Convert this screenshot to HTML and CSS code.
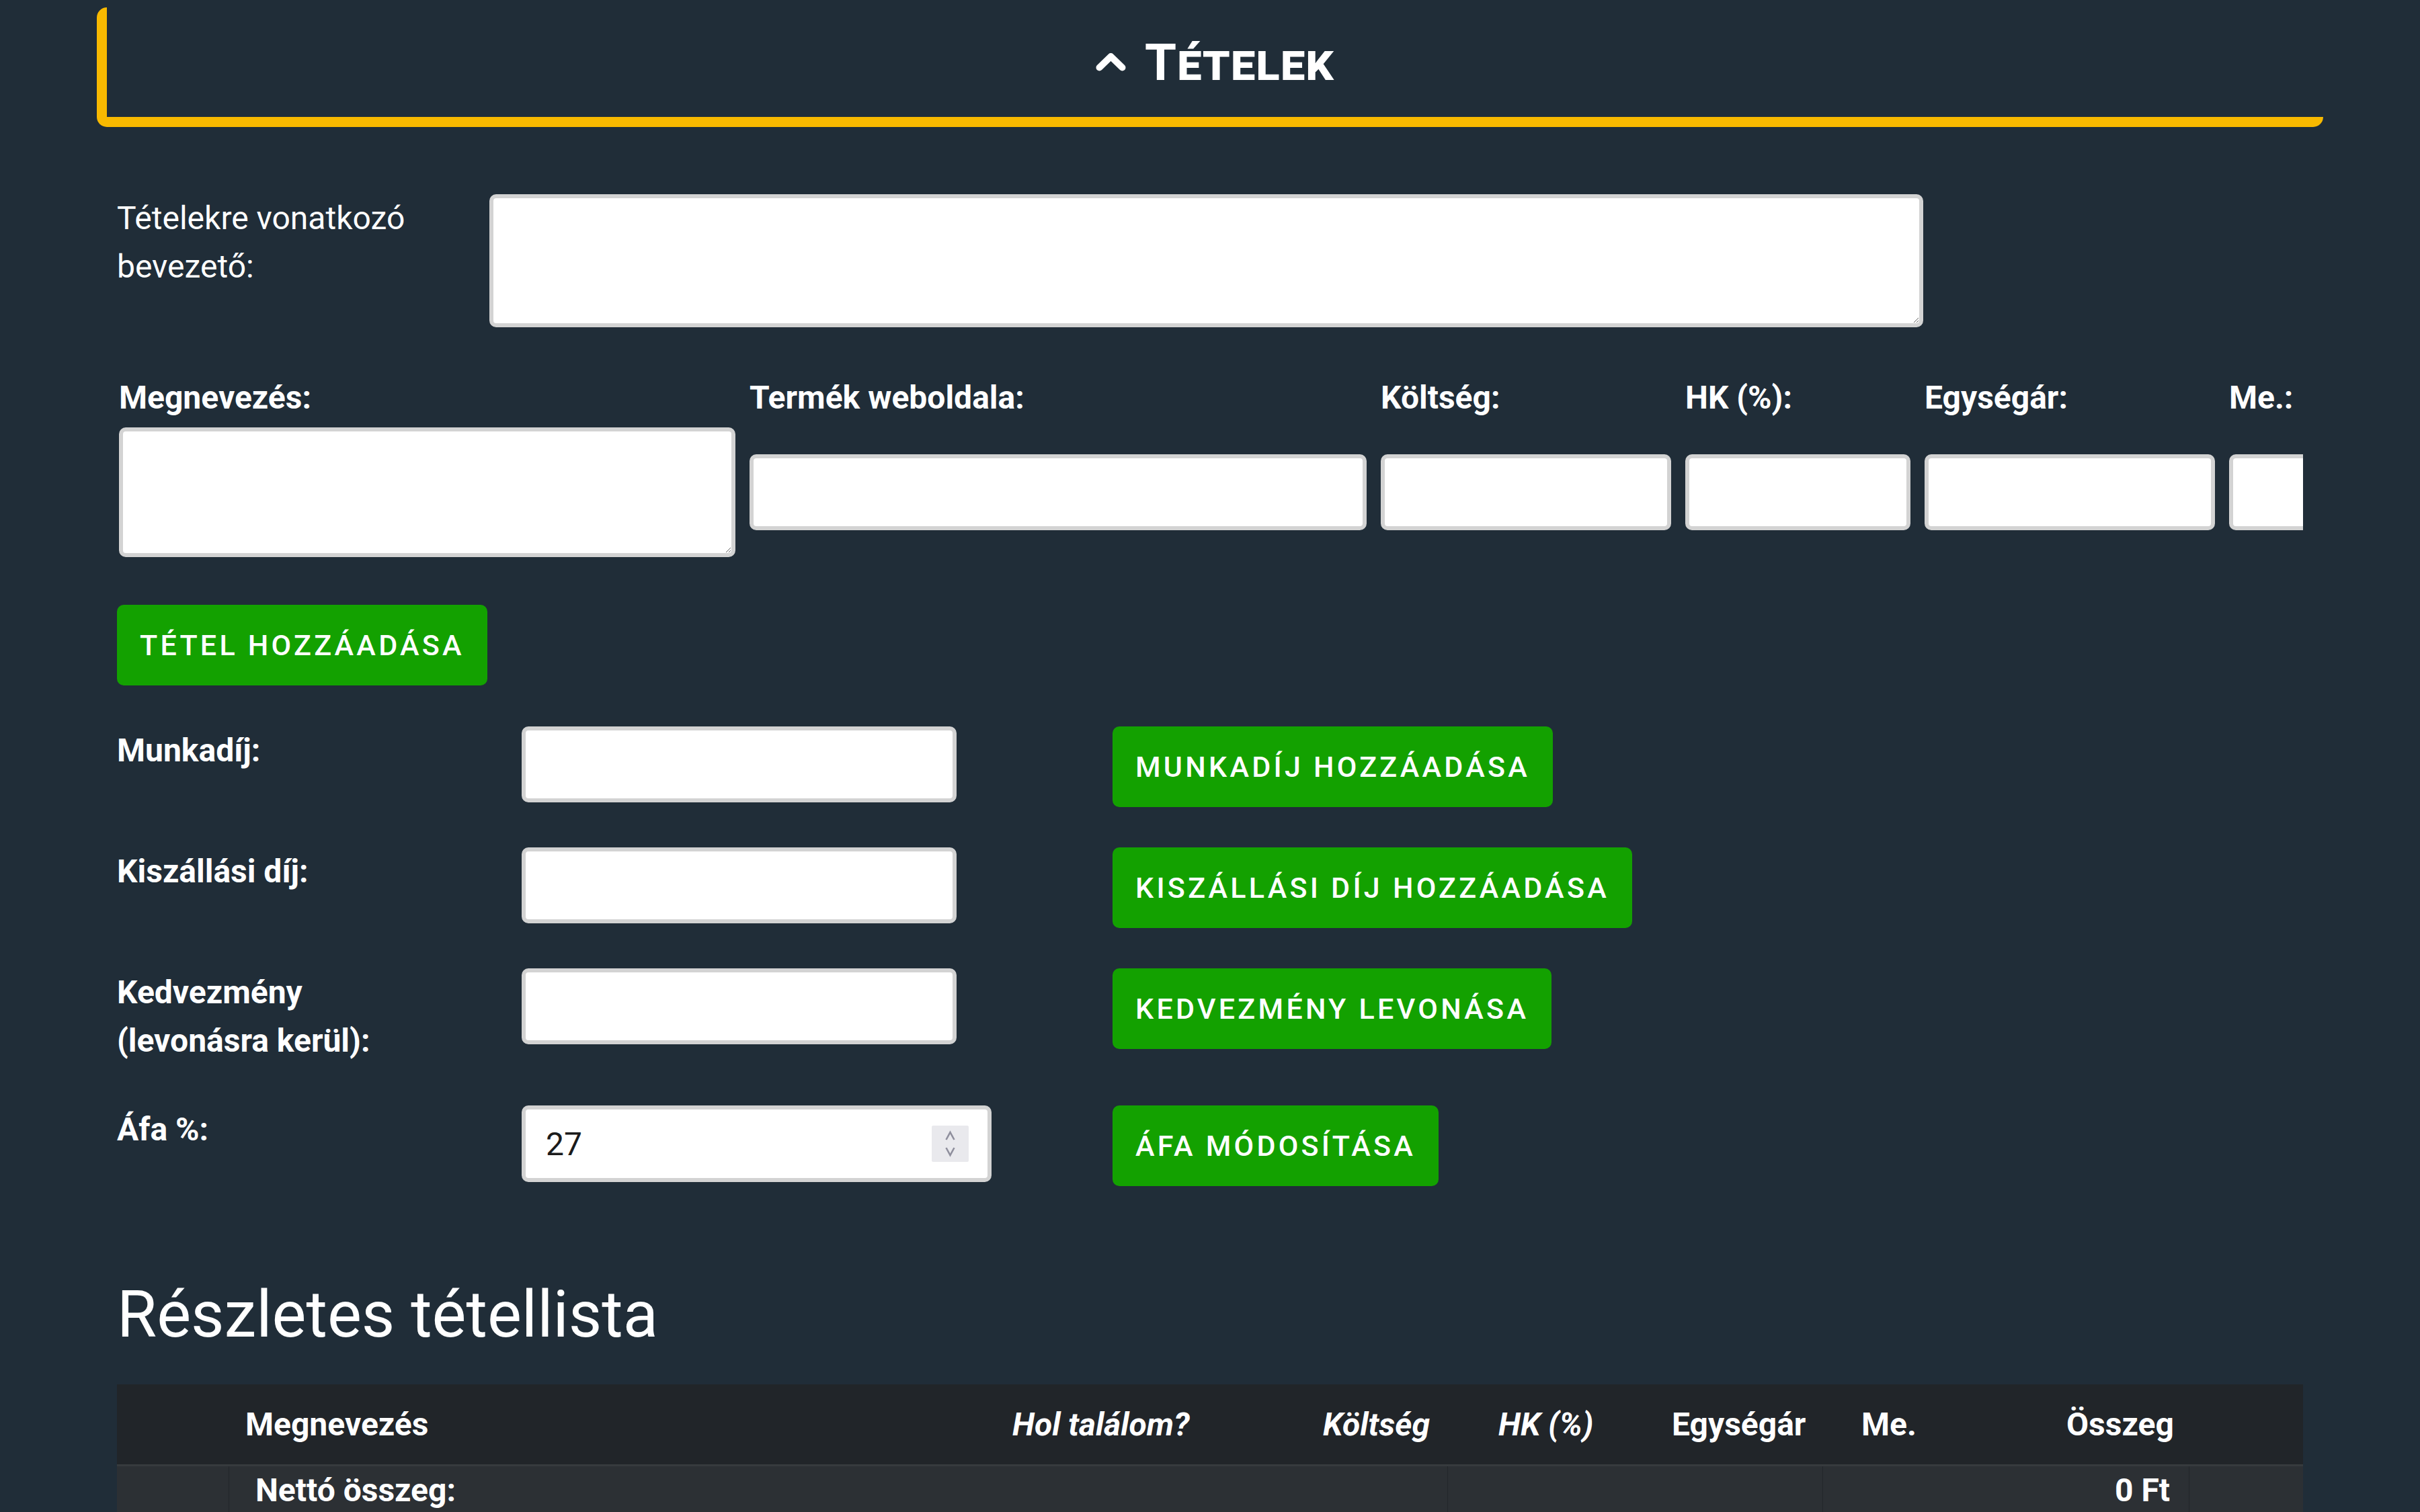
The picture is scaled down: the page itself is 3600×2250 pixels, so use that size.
FILE: index.html
```html
<!DOCTYPE html>
<html lang="hu">
<head>
<meta charset="utf-8">
<title>Tételek</title>
<link rel="stylesheet" href="styles.css">
</head>
<body>
<div class="page">
  <div class="section-head">
    <svg class="chev" viewBox="0 0 45 29" aria-hidden="true"><path d="M5.5 22.5 L22.5 6 L39.5 22.5" fill="none" stroke="#fff" stroke-width="10" stroke-linecap="round" stroke-linejoin="round"/></svg>
    <span class="section-title">Tételek</span>
  </div>

  <div class="content">
    <div class="intro-row">
      <label class="intro-label">Tételekre vonatkozó bevezető:</label>
      <textarea class="field intro-text"></textarea>
    </div>

    <div class="item-grid">
      <label class="lbl">Megnevezés:</label>
      <label class="lbl">Termék weboldala:</label>
      <label class="lbl">Költség:</label>
      <label class="lbl">HK (%):</label>
      <label class="lbl">Egységár:</label>
      <label class="lbl">Me.:</label>
      <textarea class="field field-area"></textarea>
      <input class="field field-line" type="text">
      <input class="field field-line" type="text">
      <input class="field field-line" type="text">
      <input class="field field-line" type="text">
      <input class="field field-line" type="text">
    </div>

    <button class="btn btn-add" type="button">Tétel hozzáadása</button>

    <div class="extra-grid">
      <label class="lbl">Munkadíj:</label>
      <input class="field field-extra" type="text">
      <button class="btn" type="button">Munkadíj hozzáadása</button>

      <label class="lbl">Kiszállási díj:</label>
      <input class="field field-extra" type="text">
      <button class="btn" type="button">Kiszállási díj hozzáadása</button>

      <label class="lbl">Kedvezmény (levonásra kerül):</label>
      <input class="field field-extra" type="text">
      <button class="btn" type="button">Kedvezmény levonása</button>

      <label class="lbl">Áfa %:</label>
      <div class="num-wrap">
        <input class="field field-num" type="text" value="27">
        <span class="spinner" aria-hidden="true">
          <svg viewBox="0 0 55 54"><path d="M21.5 21 L27.5 10 L33.5 21" fill="none" stroke="#8f8f9d" stroke-width="2.6"/><path d="M21.5 33 L27.5 44 L33.5 33" fill="none" stroke="#8f8f9d" stroke-width="2.6"/></svg>
        </span>
      </div>
      <button class="btn" type="button">Áfa módosítása</button>
    </div>

    <h2 class="list-title">Részletes tétellista</h2>

    <div class="table">
      <div class="thead">
        <span></span>
        <span>Megnevezés</span>
        <span class="it">Hol találom?</span>
        <span class="it">Költség</span>
        <span class="it">HK (%)</span>
        <span>Egységár</span>
        <span>Me.</span>
        <span>Összeg</span>
      </div>
      <div class="trow">
        <span class="cell"></span>
        <span class="cell cell-label">Nettó összeg:</span>
        <span class="cell"></span>
        <span class="cell cell-sum">0 Ft</span>
        <span class="cell"></span>
      </div>
    </div>
  </div>
</div>
</body>
</html>
```

FILE: styles.css
```css
* { box-sizing: border-box; }

html, body {
  margin: 0;
  background: #202d38;
}

body {
  font-family: Roboto, "Liberation Sans", sans-serif;
  color: #fff;
  font-size: 48px;
  line-height: 72px;
}

.page {
  padding: 11px 144px 0;
  height: 2250px;
  overflow: hidden;
}

/* collapsible section header */
.section-head {
  height: 178px;
  border-left: 15px solid #f8b900;
  border-bottom: 15px solid #f8b900;
  border-radius: 15px;
  display: flex;
  align-items: center;
  justify-content: center;
  gap: 28px;
}

.chev {
  width: 45px;
  height: 29px;
  display: block;
}

.section-title {
  font-size: 76px;
  font-weight: 700;
  font-variant: small-caps;
  letter-spacing: 1px;
  line-height: 1;
}

.content {
  margin: 0 30px;
}

/* intro */
.intro-row {
  margin-top: 100px;
  display: grid;
  grid-template-columns: 554px 2133px;
  align-items: start;
}

.intro-label {
  padding-right: 40px;
  line-height: 72px;
}

.field {
  display: block;
  background: #fff;
  border: 6px solid #d3d3d3;
  border-radius: 10px;
  font-family: Roboto, "Liberation Sans", sans-serif;
  font-size: 48px;
  color: #1b1b1b;
  outline: none;
  margin: 0;
}

.intro-text {
  width: 2133px;
  height: 198px;
}

/* item inputs */
.item-grid {
  margin-top: 69px;
  display: grid;
  grid-template-columns: 917px 918px 432px 335px 432px 335px;
  column-gap: 21px;
  row-gap: 8px;
  padding-left: 3px;
  overflow: hidden;
}

.lbl {
  font-weight: 700;
  line-height: 72px;
}

.field-area {
  width: 100%;
  height: 193px;
}

.field-line {
  width: 100%;
  height: 113px;
  align-self: center;
}

/* buttons */
.btn {
  display: block;
  height: 120px;
  padding: 0 34px;
  border: none;
  border-radius: 10px;
  background: #13a100;
  color: #fff;
  font-family: Roboto, "Liberation Sans", sans-serif;
  font-size: 43px;
  font-weight: 500;
  letter-spacing: 4.25px;
  text-transform: uppercase;
  white-space: nowrap;
}

.btn-add {
  margin-top: 71px;
}

/* extras */
.extra-grid {
  margin-top: 61px;
  display: grid;
  grid-template-columns: 602px 879px auto;
  row-gap: 60px;
  align-items: start;
  justify-items: start;
}

.extra-grid .lbl {
  padding-right: 130px;
}

.field-extra {
  width: 647px;
  height: 113px;
}

.num-wrap {
  position: relative;
  width: 699px;
  height: 114px;
}

.field-num {
  width: 100%;
  height: 100%;
  padding: 0 30px;
}

.spinner {
  position: absolute;
  right: 34px;
  top: 30px;
  width: 55px;
  height: 54px;
  background: #e9e9ed;
  border-radius: 2px;
}

.spinner svg {
  display: block;
  width: 55px;
  height: 54px;
}

/* list */
.list-title {
  margin: 132px 0 0;
  font-size: 96px;
  font-weight: 400;
  line-height: 118px;
}

.table {
  margin-top: 45px;
}

.thead {
  display: grid;
  grid-template-columns: 191px 1141px 462px 261px 258px 282px 305px 1fr;
  align-items: center;
  height: 122px;
  background: #212529;
  border-bottom: 3px solid #373b3e;
  font-weight: 700;
}

.thead .it {
  font-style: italic;
}

.trow {
  display: grid;
  grid-template-columns: 166px 1813px 558px 545px 1fr;
  height: 130px;
  background: #2c3034;
}

.cell {
  border-left: 1px solid #22262a;
}

.cell:first-child {
  border-left: none;
}

.cell-label {
  padding-left: 39px;
  font-weight: 700;
}

.cell-sum {
  text-align: right;
  padding-right: 28px;
  font-weight: 700;
}
```
